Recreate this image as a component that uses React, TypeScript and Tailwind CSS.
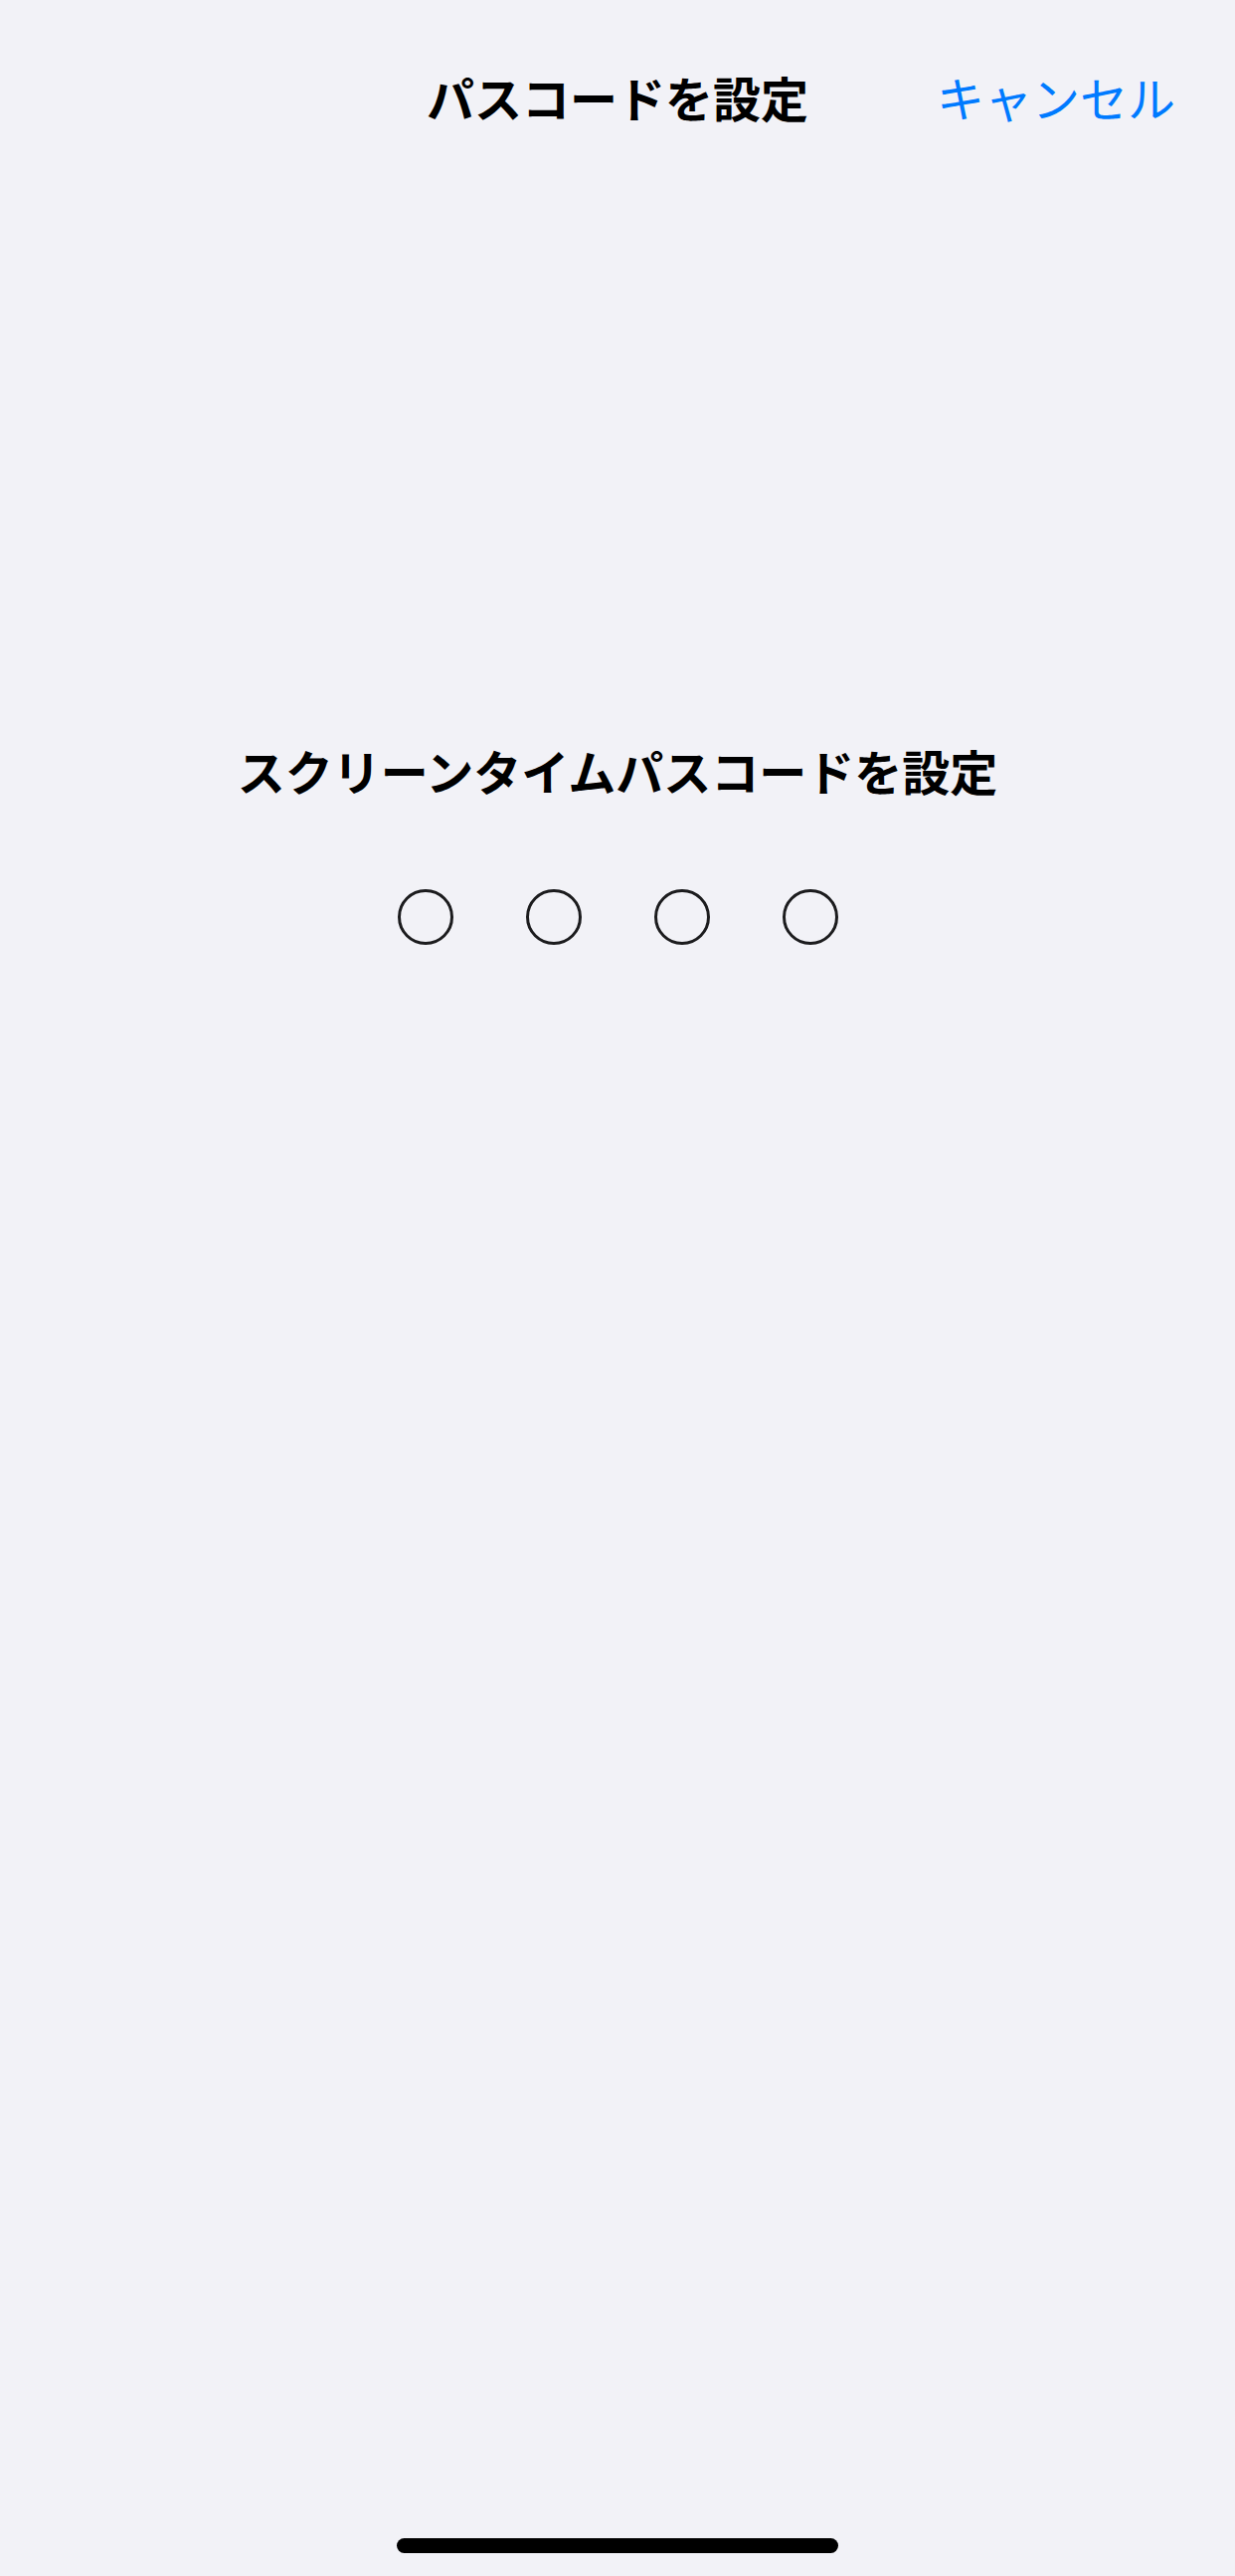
import React from "react";

export default function App() {
  return (
    <div
      className="relative flex h-screen w-full flex-col bg-[#F2F2F7] text-black"
      style={{ fontFamily: '"Noto Sans CJK JP", "Noto Sans", sans-serif' }}
    >
      {/* Navigation bar */}
      <div className="grid grid-cols-[1fr_auto_1fr] items-center pt-[73px]">
        <div />
        <div className="text-[48px] leading-[48px] font-bold">パスコードを設定</div>
        <div className="flex justify-end pr-[60px]">
          <span className="text-[48px] leading-[48px] text-[#007AFF]">キャンセル</span>
        </div>
      </div>

      {/* Content */}
      <div className="mt-[629px] flex flex-col items-center">
        <div className="text-[48px] leading-[48px] font-bold">スクリーンタイムパスコードを設定</div>
        <div className="mt-[96px] flex gap-[73px]">
          <div className="h-[56px] w-[56px] rounded-full border-[3px] border-[#1c1c1e]" />
          <div className="h-[56px] w-[56px] rounded-full border-[3px] border-[#1c1c1e]" />
          <div className="h-[56px] w-[56px] rounded-full border-[3px] border-[#1c1c1e]" />
          <div className="h-[56px] w-[56px] rounded-full border-[3px] border-[#1c1c1e]" />
        </div>
      </div>

      <div className="flex-1" />

      {/* Home indicator */}
      <div className="mb-[23px] flex justify-center">
        <div className="h-[15px] w-[444px] rounded-full bg-black" />
      </div>
    </div>
  );
}
